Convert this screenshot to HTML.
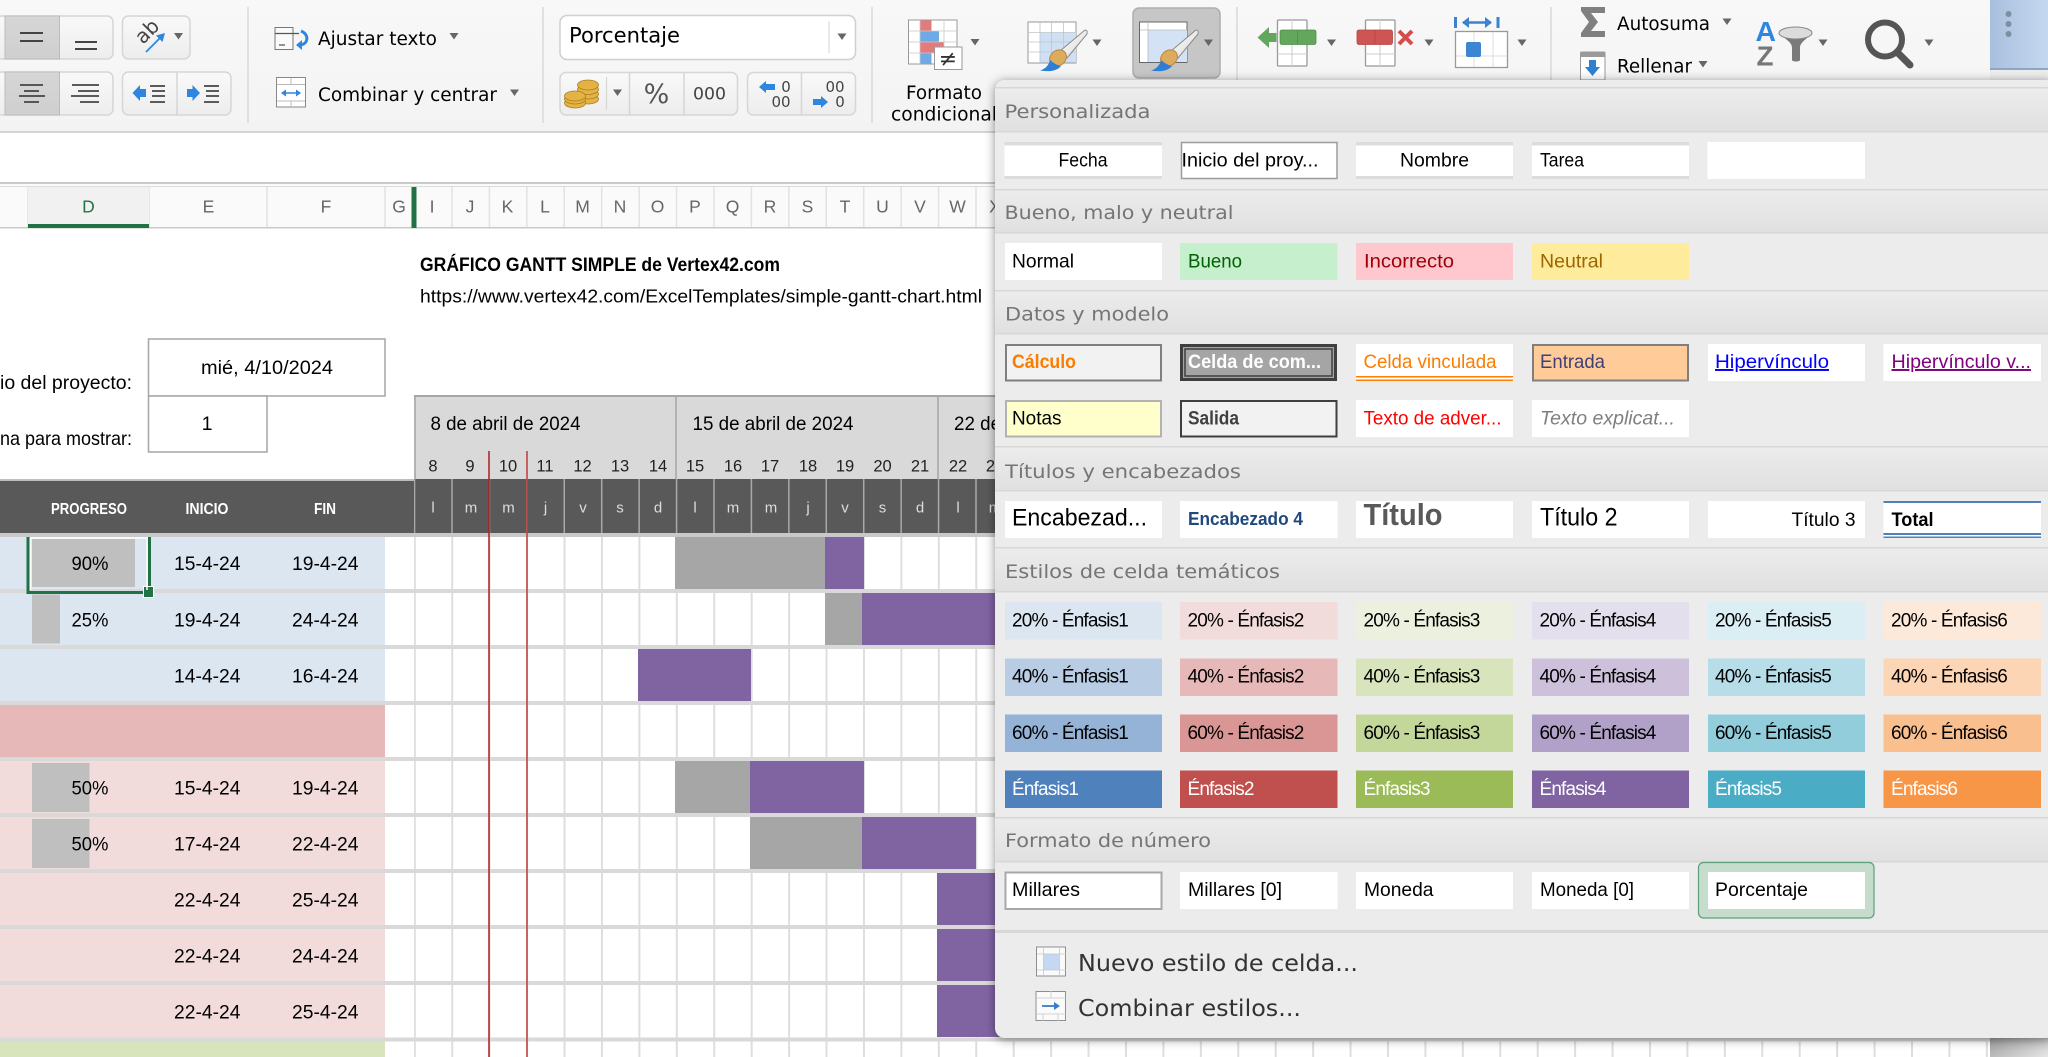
<!DOCTYPE html>
<html lang="es"><head><meta charset="utf-8"><title>Estilos de celda</title>
<style>
html,body{margin:0;padding:0;width:2048px;height:1057px;overflow:hidden;background:#fff}
svg{display:block}
text{font-family:"Liberation Sans",sans-serif;font-size:19.5px;fill:#000}
.d{font-family:"DejaVu Sans","Liberation Sans",sans-serif;font-size:18.5px}
.h{font-family:"DejaVu Sans","Liberation Sans",sans-serif;font-size:19px;fill:#757575}
.e{font-size:19px;letter-spacing:-.84px}
.w{fill:#fff}
.cl{font-size:17.5px;fill:#666;text-anchor:middle}
.dn{font-size:16.5px;text-anchor:middle;fill:#222}
.dl{font-size:15px;text-anchor:middle;fill:#ddd}
.th{font-size:16px;font-weight:bold;fill:#fff}
</style></head><body>
<svg width="2048" height="1057" viewBox="0 0 2048 1057" xmlns="http://www.w3.org/2000/svg">
<defs>
<linearGradient id="rb" x1="0" y1="0" x2="0" y2="1"><stop offset="0" stop-color="#f8f8f8"/><stop offset="1" stop-color="#f3f3f3"/></linearGradient>
<linearGradient id="btn" x1="0" y1="0" x2="0" y2="1"><stop offset="0" stop-color="#f9f9f9"/><stop offset="1" stop-color="#ededed"/></linearGradient>
<linearGradient id="pr" x1="0" y1="0" x2="0" y2="1"><stop offset="0" stop-color="#d6d6d6"/><stop offset="1" stop-color="#cfcfcf"/></linearGradient>
<linearGradient id="band" x1="0" y1="0" x2="0" y2="1"><stop offset="0" stop-color="#ececec"/><stop offset="1" stop-color="#e0e0e0"/></linearGradient>
<linearGradient id="blue" x1="0" y1="0" x2="1" y2="0"><stop offset="0" stop-color="#a8bfdd"/><stop offset="1" stop-color="#c6d8f0"/></linearGradient>
<linearGradient id="corner" x1="0" y1="0" x2="1" y2="1"><stop offset="0" stop-color="#8f8f8f"/><stop offset="1" stop-color="#e6e6e6"/></linearGradient>
<linearGradient id="hnd" x1="0" y1="0" x2="1" y2="1"><stop offset="0" stop-color="#fff"/><stop offset="1" stop-color="#d8d8d8"/></linearGradient>
<pattern id="vl" x="413.8" y="0" width="37.43" height="10" patternUnits="userSpaceOnUse"><rect x="0" width="2" height="10" fill="#dedede"/></pattern>
<pattern id="vh" x="413.8" y="0" width="37.43" height="10" patternUnits="userSpaceOnUse"><rect x="0" width="1.5" height="10" fill="#e2e2e2"/></pattern>
<pattern id="vd" x="413.8" y="0" width="37.43" height="10" patternUnits="userSpaceOnUse"><rect x="0" width="1.5" height="10" fill="#a9a9a9"/></pattern>
<path id="t" d="M-4.5-3H4.5L0 3.5Z" fill="#666"/>
<g id="brush">
<path d="M1085 30Q1088 30 1087 34L1067 58L1060 51Z" fill="url(#hnd)" stroke="#8a8a8a"/>
<ellipse cx="1058" cy="58" rx="9" ry="7.5" transform="rotate(-40 1058 58)" fill="#dcab5e" stroke="#b5873f"/>
<path d="M1040 70.5C1046 69 1049 64 1050.5 60C1053 63 1057 65 1061 66C1057 71 1050 72 1040 70.5Z" fill="#2e7dd7"/>
</g>
</defs>

<!-- ribbon -->
<rect width="2048" height="132" fill="url(#rb)"/>
<rect y="131" width="2048" height="2" fill="#d4d4d4"/>
<rect y="133" width="2048" height="49" fill="#fff"/>
<rect y="182" width="2048" height="2" fill="#c9c9c9"/>
<rect y="184" width="2048" height="2" fill="#fafafa"/>
<rect y="186" width="2048" height="1" fill="#dcdcdc"/>

<!-- alignment groups -->
<rect x="-10" y="16" width="123" height="43" rx="6" fill="url(#btn)" stroke="#d6d6d6" stroke-width="1.5"/>
<rect x="5" y="16" width="54.5" height="43" fill="url(#pr)" stroke="#bcbcbc"/>
<path d="M20 33H43M20 41H43M75 42H97M75 49H97" stroke="#444" stroke-width="2"/>
<rect x="-10" y="72" width="123" height="43" rx="6" fill="url(#btn)" stroke="#d6d6d6" stroke-width="1.5"/>
<rect x="5" y="72" width="54.5" height="43" fill="url(#pr)" stroke="#bcbcbc"/>
<path d="M20 85H43M24 91H39M19 96H45M24 102H39M72 85H99M78 91H99M71 96H99M80 102H99" stroke="#444" stroke-width="1.8"/>
<rect x="122.5" y="16" width="67.5" height="43" rx="6" fill="url(#btn)" stroke="#d6d6d6" stroke-width="1.5"/>
<text class="d" transform="translate(143,45) rotate(-45)" style="font-size:20px;fill:#444">ab</text>
<path d="M146 52L163 35" stroke="#2f86e0" stroke-width="1.8"/><path d="M165 33L156 35.5L162.5 42Z" fill="#2f86e0"/>
<use href="#t" x="178.5" y="36"/>
<rect x="122.5" y="72" width="108.5" height="43" rx="6" fill="url(#btn)" stroke="#d6d6d6" stroke-width="1.5"/>
<path d="M177 72V115" stroke="#d6d6d6" stroke-width="1.5"/>
<path d="M132.5 93L140 85V89H146V97H140V101Z" fill="#2f86e0"/>
<path d="M150 86H165M152 91H165M152 96H165M150 102H165" stroke="#444" stroke-width="1.8"/>
<path d="M200 93L192.5 85V89H187V97H192.5V101Z" fill="#2f86e0"/>
<path d="M204 86H219M206 91H219M206 96H219M204 102H219" stroke="#444" stroke-width="1.8"/>
<path d="M248 7V123M543 7V123M872 7V123M1237 7V80M1551 7V80" stroke="#d9d9d9" stroke-width="1.5"/>

<!-- wrap / merge -->
<rect x="275" y="27.5" width="18" height="22" fill="#fafafa" stroke="#777"/>
<path d="M275 33.5H299M279 45H285" stroke="#555" stroke-width="1.2"/>
<path d="M301 31C309 34 309 44 300 45" fill="none" stroke="#2f86e0" stroke-width="3"/><path d="M296 45L302 40V50Z" fill="#2f86e0"/>
<text class="d" x="318" y="45" textLength="119" lengthAdjust="spacingAndGlyphs">Ajustar texto</text>
<use href="#t" x="454" y="36"/>
<rect x="276.5" y="77.5" width="29" height="29.5" fill="#fff" stroke="#888"/>
<path d="M277 84.5H305M277 101H305M291 78V84M291 101V107" stroke="#bbb"/>
<path d="M282 93H300" stroke="#2f86e0" stroke-width="1.5"/><path d="M281 93L286 89.5V96.5ZM301 93L296 89.5V96.5Z" fill="#2f86e0"/>
<text class="d" x="318" y="101" textLength="179" lengthAdjust="spacingAndGlyphs">Combinar y centrar</text>
<use href="#t" x="514.5" y="92.5"/>

<!-- number format -->
<rect x="560" y="15.5" width="295.5" height="44" rx="7" fill="#fff" stroke="#cfcfcf" stroke-width="1.5"/>
<path d="M829 21V53" stroke="#e2e2e2" stroke-width="1.5"/>
<text class="d" x="569" y="42.5" style="font-size:21px" textLength="111" lengthAdjust="spacingAndGlyphs">Porcentaje</text>
<use href="#t" x="842" y="36.5"/>
<rect x="560" y="72.5" width="177.5" height="42.5" rx="6" fill="url(#btn)" stroke="#d6d6d6" stroke-width="1.5"/>
<path d="M606.5 77V110" stroke="#d6d6d6" stroke-width="1.2"/><path d="M629.5 72.5V115M684 72.5V115" stroke="#d6d6d6" stroke-width="1.5"/>
<g fill="#e5b343" stroke="#a97c22" stroke-width=".8">
<ellipse cx="588" cy="99" rx="10.5" ry="5"/><ellipse cx="588" cy="94" rx="10.5" ry="5"/><ellipse cx="588" cy="89.5" rx="10.5" ry="5"/><ellipse cx="588" cy="85" rx="10.5" ry="5"/>
<ellipse cx="575" cy="103" rx="10.5" ry="5"/><ellipse cx="575" cy="99" rx="10.5" ry="5"/><ellipse cx="575" cy="96" rx="10.5" ry="5"/>
</g>
<use href="#t" x="617.5" y="92.5"/>
<text class="d" x="656.5" y="103" text-anchor="middle" style="font-size:27px;fill:#555">%</text>
<text class="d" x="693" y="99.5" style="font-size:17px;fill:#444" textLength="33" lengthAdjust="spacingAndGlyphs">000</text>
<rect x="747.5" y="72.5" width="108" height="42.5" rx="6" fill="url(#btn)" stroke="#d6d6d6" stroke-width="1.5"/>
<path d="M801.5 72.5V115" stroke="#d6d6d6" stroke-width="1.5"/>
<path d="M759 87L766 81V84H775V90H766V93Z" fill="#2f86e0"/><path d="M828 102L821 96V99H813V105H821V108Z" fill="#2f86e0"/>
<text class="d" x="786" y="92" text-anchor="middle" style="font-size:15px;fill:#444">0</text>
<text class="d" x="781" y="107" text-anchor="middle" style="font-size:15px;fill:#444">00</text>
<text class="d" x="835" y="92" text-anchor="middle" style="font-size:15px;fill:#444">00</text>
<text class="d" x="840" y="107" text-anchor="middle" style="font-size:15px;fill:#444">0</text>

<!-- conditional -->
<rect x="908.5" y="20" width="48.5" height="44" fill="#fff" stroke="#999"/>
<rect x="920" y="20.5" width="11.5" height="11" fill="#e27c7c"/><rect x="920" y="31" width="19" height="11" fill="#6faae8"/><rect x="920" y="42" width="24" height="11" fill="#e27c7c"/><rect x="920" y="53" width="11.5" height="11" fill="#6faae8"/>
<path d="M909 31H957M909 42H957M909 53H957M920 20V64M944 20V64" stroke="#c9c9c9" stroke-width=".8" fill="none"/>
<rect x="934.5" y="47" width="27.5" height="22.5" fill="#fff" stroke="#999"/>
<text class="d" x="948" y="66" text-anchor="middle" style="font-size:22px;fill:#333">≠</text>
<use href="#t" x="975" y="42"/>
<text class="d" x="906" y="99" textLength="76" lengthAdjust="spacingAndGlyphs">Formato</text>
<text class="d" x="891" y="120.5" textLength="106" lengthAdjust="spacingAndGlyphs">condicional</text>

<!-- table format -->
<rect x="1028" y="22" width="48" height="41" fill="#fff" stroke="#999"/>
<rect x="1040" y="32.5" width="36" height="30" fill="#cfe0f5"/>
<path d="M1040 22V63M1051.5 22V63M1063.5 22V63M1028 32.5H1076M1028 42H1076M1028 52H1076" stroke="#bfc5cc" stroke-width=".8"/>
<use href="#brush"/><use href="#t" x="1097" y="42.5"/>
<rect x="1133" y="8" width="87" height="70" rx="6" fill="#c6c6c6" stroke="#adadad" stroke-width="1.5"/>
<rect x="1139.5" y="22" width="47.5" height="40.5" fill="#fff" stroke="#666"/>
<rect x="1148" y="30" width="39" height="32" fill="#d3e2f5"/><path d="M1140 30H1187M1148 22V62" stroke="#bbb" stroke-width=".8"/>
<use href="#brush" x="111"/><use href="#t" x="1208.5" y="42.5"/>

<!-- insert -->
<rect x="1277.5" y="20" width="29.5" height="46" rx="1" fill="#fff" stroke="#999" stroke-width="1.3"/>
<path d="M1277.5 54H1307M1292 20V30M1292 44V66" stroke="#ccc"/>
<rect x="1280" y="30" width="36" height="14.5" rx="2" fill="#62a75c" stroke="#4f8e49" stroke-width=".8"/><path d="M1297.5 30V44" stroke="#4f8e49" stroke-width=".8"/>
<path d="M1257.5 37.5L1269 27V33H1276.5V42H1269V48Z" fill="#62a75c"/><use href="#t" x="1331.5" y="42.5"/>
<!-- delete -->
<rect x="1365.5" y="20" width="29.5" height="46" rx="1" fill="#fff" stroke="#999" stroke-width="1.3"/>
<path d="M1365.5 54H1395M1380 20V30M1380 44V66" stroke="#ccc"/>
<rect x="1357" y="30" width="35.5" height="14.5" rx="2" fill="#cf5555" stroke="#b54343" stroke-width=".8"/><path d="M1375 30V44" stroke="#b54343" stroke-width=".8"/>
<path d="M1399 31L1412 44M1412 31L1399 44" stroke="#cf4f4f" stroke-width="4"/><use href="#t" x="1429" y="42.5"/>
<!-- format -->
<path d="M1455.5 17V28M1498 17V28" stroke="#3b82d0" stroke-width="3"/><path d="M1463 22.5H1491" stroke="#3b82d0" stroke-width="2.6"/><path d="M1462 22.5L1469 17V28ZM1492 22.5L1485 17V28Z" fill="#3b82d0"/>
<rect x="1455.5" y="31.5" width="52" height="36" fill="#fff" stroke="#999" stroke-width="1.3"/>
<path d="M1474 32V67M1493 32V67M1456 56H1507" stroke="#ddd"/>
<rect x="1466" y="42" width="15" height="15" rx="2" fill="#3d85d3"/><use href="#t" x="1522" y="42.5"/>

<!-- editing -->
<path d="M1581 7H1605V13H1591L1598 22L1591 31H1605V37H1581V33L1589 22L1581 11Z" fill="#808080"/>
<text class="d" x="1617" y="30" textLength="93" lengthAdjust="spacingAndGlyphs">Autosuma</text>
<use href="#t" x="1727" y="21.5"/>
<rect x="1580.5" y="52" width="24.5" height="28" rx="1" fill="#fff" stroke="#999"/><rect x="1581" y="52" width="24" height="5" fill="#9a9a9a"/>
<path d="M1589 60H1596V67H1600L1592.5 76L1585 67H1589Z" fill="#2f7fd0"/>
<text class="d" x="1617" y="72.5" textLength="75" lengthAdjust="spacingAndGlyphs">Rellenar</text>
<use href="#t" x="1703" y="64"/>
<text x="1755.5" y="41" style="font-size:28px;font-weight:bold;fill:#2f86e0" textLength="20.5" lengthAdjust="spacingAndGlyphs">A</text>
<text x="1756.5" y="65.5" style="font-size:28px;font-weight:bold;fill:#777" textLength="17" lengthAdjust="spacingAndGlyphs">Z</text>
<path d="M1779 33C1786 40 1792 42 1792 48V60C1792 62 1800 62 1800 60V48C1800 42 1806 40 1812 33Z" fill="#7a7a7a"/><ellipse cx="1795.5" cy="33" rx="16.5" ry="6" fill="#dcdcdc" stroke="#888"/>
<use href="#t" x="1823" y="42.5"/>
<circle cx="1885" cy="39.5" r="17" fill="#f6f6f6" stroke="#555" stroke-width="6"/>
<path d="M1897 52L1910 65" stroke="#555" stroke-width="7" stroke-linecap="round"/>
<use href="#t" x="1929" y="42.5"/>
<rect x="1990" width="58" height="68" fill="url(#blue)"/><rect x="1990" y="68" width="58" height="2" fill="#8ea6c4"/>
<circle cx="2008.5" cy="14" r="3" fill="#7f8ea3"/><circle cx="2008.5" cy="24" r="3" fill="#7f8ea3"/><circle cx="2008.5" cy="34" r="3" fill="#7f8ea3"/>

<!-- column header -->
<rect y="187" width="2048" height="40" fill="#fafafa"/>
<rect x="414" y="187" width="1576" height="40" fill="url(#vh)"/>
<path d="M28 187V227M149 187V227M267 187V227M385 187V227" stroke="#e2e2e2" stroke-width="1.5"/>
<rect y="227" width="2048" height="1.5" fill="#c9c9c9"/>
<rect x="28" y="187" width="121" height="37" fill="#f1f1f1"/>
<rect x="28" y="224" width="121" height="4" fill="#217346"/>
<rect x="411.5" y="187" width="5" height="41" fill="#217346"/>
<text x="88.5" y="212.5" style="font-size:17.5px;fill:#217346;text-anchor:middle">D</text>
<text class="cl" x="208.5" y="212.5">E</text><text class="cl" x="326" y="212.5">F</text><text class="cl" x="399" y="212.5">G</text>
<text class="cl" x="432" y="212.5">I</text><text class="cl" x="470" y="212.5">J</text><text class="cl" x="507.5" y="212.5">K</text><text class="cl" x="545" y="212.5">L</text><text class="cl" x="582.5" y="212.5">M</text><text class="cl" x="620" y="212.5">N</text><text class="cl" x="657.5" y="212.5">O</text><text class="cl" x="695" y="212.5">P</text><text class="cl" x="732.5" y="212.5">Q</text><text class="cl" x="770" y="212.5">R</text><text class="cl" x="807.5" y="212.5">S</text><text class="cl" x="845" y="212.5">T</text><text class="cl" x="882.5" y="212.5">U</text><text class="cl" x="920" y="212.5">V</text><text class="cl" x="957.5" y="212.5">W</text><text class="cl" x="995" y="212.5">X</text>

<!-- sheet header -->
<text x="420" y="271" style="font-weight:bold;font-size:19px" textLength="360" lengthAdjust="spacingAndGlyphs">GRÁFICO GANTT SIMPLE de Vertex42.com</text>
<text x="420" y="302.5" style="font-size:18.5px" textLength="562" lengthAdjust="spacingAndGlyphs">https://www.vertex42.com/ExcelTemplates/simple-gantt-chart.html</text>
<rect x="148.5" y="339" width="236.5" height="57" fill="#fff" stroke="#a6a6a6" stroke-width="1.5"/>
<rect x="148.5" y="396" width="118.5" height="56" fill="#fff" stroke="#a6a6a6" stroke-width="1.5"/>
<text x="201" y="374" textLength="132" lengthAdjust="spacingAndGlyphs">mié, 4/10/2024</text>
<text x="207" y="430" text-anchor="middle">1</text>
<text x="0" y="389" textLength="132" lengthAdjust="spacingAndGlyphs">io del proyecto:</text>
<text x="0" y="445" textLength="132" lengthAdjust="spacingAndGlyphs">na para mostrar:</text>

<!-- gantt head -->
<rect x="414" y="395" width="600" height="84" fill="#d9d9d9"/>
<path d="M414 396H1000" stroke="#a6a6a6" stroke-width="2"/>
<path d="M415 395V479M676 395V479M938 395V479" stroke="#a6a6a6" stroke-width="1.5"/>
<text x="430.5" y="430" style="font-size:19px" textLength="150" lengthAdjust="spacingAndGlyphs">8 de abril de 2024</text>
<text x="692.5" y="430" style="font-size:19px" textLength="161" lengthAdjust="spacingAndGlyphs">15 de abril de 2024</text>
<text x="954" y="430" style="font-size:19px" textLength="161" lengthAdjust="spacingAndGlyphs">22 de abril de 2024</text>
<text class="dn" x="433" y="471.5">8</text><text class="dn" x="470" y="471.5">9</text><text class="dn" x="508" y="471.5">10</text><text class="dn" x="545" y="471.5">11</text><text class="dn" x="582.5" y="471.5">12</text><text class="dn" x="620" y="471.5">13</text><text class="dn" x="658" y="471.5">14</text><text class="dn" x="695" y="471.5">15</text><text class="dn" x="733" y="471.5">16</text><text class="dn" x="770" y="471.5">17</text><text class="dn" x="808" y="471.5">18</text><text class="dn" x="845" y="471.5">19</text><text class="dn" x="882.5" y="471.5">20</text><text class="dn" x="920" y="471.5">21</text><text class="dn" x="958" y="471.5">22</text><text class="dn" x="995" y="471.5">23</text>
<rect y="480" width="414" height="53" fill="#595959"/><rect y="479" width="414" height="2" fill="#bdbdbd"/>
<rect x="414" y="479" width="1000" height="54" fill="#595959"/>
<rect x="414" y="479" width="1000" height="54" fill="url(#vd)"/>
<text class="th" x="51" y="514" textLength="76" lengthAdjust="spacingAndGlyphs">PROGRESO</text>
<text class="th" x="185.5" y="514" textLength="43" lengthAdjust="spacingAndGlyphs">INICIO</text>
<text class="th" x="314" y="514" textLength="22" lengthAdjust="spacingAndGlyphs">FIN</text>
<text class="dl" x="433" y="512.5">l</text><text class="dl" x="471" y="512.5">m</text><text class="dl" x="508.5" y="512.5">m</text><text class="dl" x="545.5" y="512.5">j</text><text class="dl" x="583" y="512.5">v</text><text class="dl" x="620" y="512.5">s</text><text class="dl" x="658" y="512.5">d</text><text class="dl" x="695" y="512.5">l</text><text class="dl" x="733" y="512.5">m</text><text class="dl" x="771" y="512.5">m</text><text class="dl" x="808" y="512.5">j</text><text class="dl" x="845" y="512.5">v</text><text class="dl" x="882.5" y="512.5">s</text><text class="dl" x="920" y="512.5">d</text><text class="dl" x="958" y="512.5">l</text><text class="dl" x="995" y="512.5">m</text>

<!-- rows -->
<rect x="0" y="537" width="385" height="168" fill="#dce6f1"/>
<rect x="0" y="705" width="385" height="56" fill="#e6b8b7"/>
<rect x="0" y="761" width="385" height="280" fill="#f2dcdb"/>
<rect x="0" y="1041" width="385" height="16" fill="#d8e4bc"/>
<rect x="414" y="537" width="1576" height="520" fill="url(#vl)"/>
<!-- gantt bars -->
<rect x="675" y="537" width="150" height="52" fill="#a6a6a6"/><rect x="825" y="537" width="39" height="52" fill="#8064a2"/>
<rect x="825" y="593" width="37" height="52" fill="#a6a6a6"/><rect x="862" y="593" width="140" height="52" fill="#8064a2"/>
<rect x="638" y="649" width="113" height="52" fill="#8064a2"/>
<rect x="675" y="761" width="75" height="52" fill="#a6a6a6"/><rect x="750" y="761" width="114" height="52" fill="#8064a2"/>
<rect x="750" y="817" width="112" height="52" fill="#a6a6a6"/><rect x="862" y="817" width="114" height="52" fill="#8064a2"/>
<rect x="937" y="873" width="65" height="52" fill="#8064a2"/><rect x="937" y="929" width="65" height="52" fill="#8064a2"/><rect x="937" y="985" width="65" height="52" fill="#8064a2"/>
<!-- bands -->
<g fill="#d9d9d9">
<rect y="533" width="1990" height="4" fill="#c8c8c8"/><rect y="589" width="1990" height="4"/><rect y="645" width="1990" height="4"/><rect y="701" width="1990" height="4"/><rect y="757" width="1990" height="4"/><rect y="813" width="1990" height="4"/><rect y="869" width="1990" height="4"/><rect y="925" width="1990" height="4"/><rect y="981" width="1990" height="4"/><rect y="1037.5" width="1990" height="4"/>
</g>
<path d="M489 451V1057" stroke="#a91f1f" stroke-width="1.5"/><path d="M527 451V1057" stroke="#c0393b" stroke-width="1.5"/>
<!-- progress -->
<rect x="32" y="539" width="103" height="48" fill="#bfbfbf"/>
<rect x="32" y="594.5" width="28" height="49" fill="#bfbfbf"/>
<rect x="32" y="763" width="57.5" height="49" fill="#bfbfbf"/>
<rect x="32" y="819" width="57.5" height="49" fill="#bfbfbf"/>
<!-- selection -->
<path d="M28 537V592.5H149.5V537" fill="none" stroke="#217346" stroke-width="3"/>
<rect x="143.5" y="586.5" width="10" height="11" fill="#217346" stroke="#fff"/>
<path d="M30 538H148M30.5 538V590M147 538V590" fill="none" stroke="#fff" stroke-width="1.5"/>
<!-- row text -->
<text x="71.5" y="570" textLength="37" lengthAdjust="spacingAndGlyphs">90%</text><text x="174" y="570" textLength="66.5" lengthAdjust="spacingAndGlyphs">15-4-24</text><text x="292" y="570" textLength="66.5" lengthAdjust="spacingAndGlyphs">19-4-24</text>
<text x="71.5" y="626.5" textLength="37" lengthAdjust="spacingAndGlyphs">25%</text><text x="174" y="626.5" textLength="66.5" lengthAdjust="spacingAndGlyphs">19-4-24</text><text x="292" y="626.5" textLength="66.5" lengthAdjust="spacingAndGlyphs">24-4-24</text>
<text x="174" y="682.5" textLength="66.5" lengthAdjust="spacingAndGlyphs">14-4-24</text><text x="292" y="682.5" textLength="66.5" lengthAdjust="spacingAndGlyphs">16-4-24</text>
<text x="71.5" y="794.5" textLength="37" lengthAdjust="spacingAndGlyphs">50%</text><text x="174" y="794.5" textLength="66.5" lengthAdjust="spacingAndGlyphs">15-4-24</text><text x="292" y="794.5" textLength="66.5" lengthAdjust="spacingAndGlyphs">19-4-24</text>
<text x="71.5" y="850.5" textLength="37" lengthAdjust="spacingAndGlyphs">50%</text><text x="174" y="850.5" textLength="66.5" lengthAdjust="spacingAndGlyphs">17-4-24</text><text x="292" y="850.5" textLength="66.5" lengthAdjust="spacingAndGlyphs">22-4-24</text>
<text x="174" y="906.5" textLength="66.5" lengthAdjust="spacingAndGlyphs">22-4-24</text><text x="292" y="906.5" textLength="66.5" lengthAdjust="spacingAndGlyphs">25-4-24</text>
<text x="174" y="962.5" textLength="66.5" lengthAdjust="spacingAndGlyphs">22-4-24</text><text x="292" y="962.5" textLength="66.5" lengthAdjust="spacingAndGlyphs">24-4-24</text>
<text x="174" y="1018.5" textLength="66.5" lengthAdjust="spacingAndGlyphs">22-4-24</text><text x="292" y="1018.5" textLength="66.5" lengthAdjust="spacingAndGlyphs">25-4-24</text>

<!-- bottom right corner -->
<rect x="1990" y="1030" width="58" height="27" fill="url(#corner)"/>
<rect x="1990" y="70" width="58" height="20" fill="#ededed"/>

<!-- panel -->
<filter id="sh" x="-5%" y="-5%" width="110%" height="110%"><feDropShadow dx="0" dy="1.5" stdDeviation="5" flood-color="#000" flood-opacity=".45"/></filter>
<rect x="995" y="80" width="1060" height="958" rx="10" fill="#ececec" filter="url(#sh)"/>
<rect x="995" y="88" width="1053" height="44" fill="url(#band)"/><rect x="995" y="190" width="1053" height="43" fill="url(#band)"/><rect x="995" y="291" width="1053" height="43" fill="url(#band)"/><rect x="995" y="447" width="1053" height="44" fill="url(#band)"/><rect x="995" y="548" width="1053" height="44" fill="url(#band)"/><rect x="995" y="818" width="1053" height="44" fill="url(#band)"/>
<g fill="#d7d7d7">
<rect x="995" y="87" width="1053" height="1.5"/><rect x="995" y="131" width="1053" height="1.5"/><rect x="995" y="189" width="1053" height="1.5"/><rect x="995" y="232" width="1053" height="1.5"/><rect x="995" y="290" width="1053" height="1.5"/><rect x="995" y="333" width="1053" height="1.5"/><rect x="995" y="446" width="1053" height="1.5"/><rect x="995" y="490" width="1053" height="1.5"/><rect x="995" y="547" width="1053" height="1.5"/><rect x="995" y="591" width="1053" height="1.5"/><rect x="995" y="817" width="1053" height="1.5"/><rect x="995" y="861" width="1053" height="1.5"/><rect x="995" y="930" width="1053" height="3"/>
</g>
<text class="h" x="1004.5" y="118" textLength="146" lengthAdjust="spacingAndGlyphs">Personalizada</text>
<text class="h" x="1004.5" y="219" textLength="229" lengthAdjust="spacingAndGlyphs">Bueno, malo y neutral</text>
<text class="h" x="1005" y="320.5" textLength="164" lengthAdjust="spacingAndGlyphs">Datos y modelo</text>
<text class="h" x="1005" y="478" textLength="236" lengthAdjust="spacingAndGlyphs">Títulos y encabezados</text>
<text class="h" x="1005" y="578" textLength="275" lengthAdjust="spacingAndGlyphs">Estilos de celda temáticos</text>
<text class="h" x="1005" y="847" textLength="206" lengthAdjust="spacingAndGlyphs">Formato de número</text>

<!-- Personalizada -->
<g fill="#fff">
<rect x="1004.5" y="142" width="157.5" height="37"/><rect x="1356" y="142" width="157" height="37"/><rect x="1532" y="142" width="157" height="37"/><rect x="1707.5" y="142" width="157.5" height="37"/>
</g>
<g fill="#dcdcdc"><rect x="1004.5" y="142" width="157.5" height="3.5"/><rect x="1004.5" y="176" width="157.5" height="3"/><rect x="1356" y="142" width="157" height="3.5"/><rect x="1356" y="176" width="157" height="3"/><rect x="1532" y="142" width="157" height="3.5"/><rect x="1532" y="176" width="157" height="3"/></g>
<rect x="1181.5" y="142.5" width="155.5" height="36" fill="#fff" stroke="#9c9c9c" stroke-width="1.5"/>
<text x="1058.5" y="166.5" textLength="49" lengthAdjust="spacingAndGlyphs">Fecha</text>
<text x="1181.5" y="166.5" textLength="137" lengthAdjust="spacingAndGlyphs">Inicio del proy...</text>
<text x="1400" y="166.5" textLength="69" lengthAdjust="spacingAndGlyphs">Nombre</text>
<text x="1540" y="166.5" textLength="44" lengthAdjust="spacingAndGlyphs">Tarea</text>

<!-- Bueno malo neutral -->
<rect x="1005" y="243" width="157" height="37" fill="#fff"/><rect x="1180" y="243" width="157.5" height="37" fill="#c6efce"/><rect x="1356" y="243" width="157" height="37" fill="#ffc7ce"/><rect x="1532" y="243" width="157" height="37" fill="#ffeb9c"/>
<text x="1012" y="267.5" textLength="62" lengthAdjust="spacingAndGlyphs">Normal</text>
<text x="1188" y="267.5" style="fill:#006100" textLength="54" lengthAdjust="spacingAndGlyphs">Bueno</text>
<text x="1364" y="267.5" style="fill:#9c0006" textLength="90" lengthAdjust="spacingAndGlyphs">Incorrecto</text>
<text x="1540" y="267.5" style="fill:#9c6500" textLength="63" lengthAdjust="spacingAndGlyphs">Neutral</text>

<!-- Datos y modelo -->
<rect x="1006" y="345" width="155" height="35.5" fill="#f2f2f2" stroke="#7f7f7f" stroke-width="2"/>
<rect x="1180" y="344" width="157" height="37" fill="#a5a5a5"/><rect x="1181.5" y="345.5" width="154" height="34" fill="none" stroke="#3f3f3f" stroke-width="3"/><rect x="1185" y="349" width="147" height="27" fill="none" stroke="#3f3f3f" stroke-width="1.5"/>
<rect x="1356" y="344" width="157" height="37" fill="#fff"/><rect x="1356" y="376" width="157" height="1.5" fill="#ff8001"/><rect x="1356" y="379.5" width="157" height="1.5" fill="#ff8001"/>
<rect x="1533" y="345" width="155" height="35.5" fill="#ffcc99" stroke="#7f7f7f" stroke-width="2"/>
<rect x="1708" y="344" width="157" height="37" fill="#fff"/><rect x="1883.5" y="344" width="157.5" height="37" fill="#fff"/>
<text x="1012" y="368" style="font-weight:bold;fill:#fa7d00" textLength="64" lengthAdjust="spacingAndGlyphs">Cálculo</text>
<text x="1188" y="368" style="font-weight:bold;fill:#fff" textLength="133" lengthAdjust="spacingAndGlyphs">Celda de com...</text>
<text x="1363.5" y="368" style="fill:#fa7d00" textLength="133" lengthAdjust="spacingAndGlyphs">Celda vinculada</text>
<text x="1540" y="368" style="fill:#3f3f76" textLength="65" lengthAdjust="spacingAndGlyphs">Entrada</text>
<text x="1715" y="368" style="fill:#0000ff" text-decoration="underline" textLength="114" lengthAdjust="spacingAndGlyphs">Hipervínculo</text>
<text x="1891.5" y="368" style="fill:#800080" text-decoration="underline" textLength="139.5" lengthAdjust="spacingAndGlyphs">Hipervínculo v...</text>
<rect x="1006" y="401" width="155" height="35.5" fill="#ffffcc" stroke="#b2b2b2" stroke-width="2"/>
<rect x="1181" y="401" width="155.5" height="35.5" fill="#f2f2f2" stroke="#3f3f3f" stroke-width="2"/>
<rect x="1356" y="400" width="157" height="37" fill="#fff"/><rect x="1532" y="400" width="157" height="37" fill="#fff"/>
<text x="1012" y="424.5" textLength="49.5" lengthAdjust="spacingAndGlyphs">Notas</text>
<text x="1188" y="424.5" style="font-weight:bold;fill:#3f3f3f" textLength="51" lengthAdjust="spacingAndGlyphs">Salida</text>
<text x="1363.5" y="424.5" style="fill:#ff0000" textLength="138" lengthAdjust="spacingAndGlyphs">Texto de adver...</text>
<text x="1540" y="424.5" style="font-style:italic;fill:#7f7f7f" textLength="135" lengthAdjust="spacingAndGlyphs">Texto explicat...</text>

<!-- Títulos -->
<rect x="1005" y="501" width="157" height="37" fill="#fff"/><rect x="1180" y="501" width="157.5" height="37" fill="#fff"/><rect x="1356" y="501" width="157" height="37" fill="#fff"/><rect x="1532" y="501" width="157" height="37" fill="#fff"/><rect x="1708" y="501" width="157" height="37" fill="#fff"/><rect x="1883.5" y="501" width="157.5" height="37" fill="#fff"/>
<rect x="1883.5" y="501" width="157.5" height="2" fill="#4f81bd"/><rect x="1883.5" y="533" width="157.5" height="2" fill="#4f81bd"/><rect x="1883.5" y="536.5" width="157.5" height="1.5" fill="#4f81bd"/>
<text x="1012" y="525.5" style="font-size:24px" textLength="135" lengthAdjust="spacingAndGlyphs">Encabezad...</text>
<text x="1188" y="525" style="font-weight:bold;fill:#1f497d;font-size:18.5px" textLength="115" lengthAdjust="spacingAndGlyphs">Encabezado 4</text>
<text x="1363.5" y="525" style="font-weight:bold;fill:#595959;font-size:31px" textLength="79" lengthAdjust="spacingAndGlyphs">Título</text>
<text x="1540" y="525.5" style="font-size:25px" textLength="77.5" lengthAdjust="spacingAndGlyphs">Título 2</text>
<text x="1791.5" y="526" style="font-size:19px" textLength="64" lengthAdjust="spacingAndGlyphs">Título 3</text>
<text x="1891.5" y="526" style="font-weight:bold;font-size:19px" textLength="42" lengthAdjust="spacingAndGlyphs">Total</text>

<!-- Temáticos -->
<g>
<rect x="1005" y="602" width="157" height="37.5" fill="#dce6f1"/><rect x="1180" y="602" width="157.5" height="37.5" fill="#f2dcdb"/><rect x="1356" y="602" width="157" height="37.5" fill="#ebf1de"/><rect x="1532" y="602" width="157" height="37.5" fill="#e4dfec"/><rect x="1708" y="602" width="157" height="37.5" fill="#daeef3"/><rect x="1883.5" y="602" width="157.5" height="37.5" fill="#fde9d9"/>
<rect x="1005" y="658.5" width="157" height="37.5" fill="#b8cce4"/><rect x="1180" y="658.5" width="157.5" height="37.5" fill="#e6b8b7"/><rect x="1356" y="658.5" width="157" height="37.5" fill="#d8e4bc"/><rect x="1532" y="658.5" width="157" height="37.5" fill="#ccc0da"/><rect x="1708" y="658.5" width="157" height="37.5" fill="#b7dee8"/><rect x="1883.5" y="658.5" width="157.5" height="37.5" fill="#fcd5b4"/>
<rect x="1005" y="714.5" width="157" height="37.5" fill="#95b3d7"/><rect x="1180" y="714.5" width="157.5" height="37.5" fill="#da9694"/><rect x="1356" y="714.5" width="157" height="37.5" fill="#c4d79b"/><rect x="1532" y="714.5" width="157" height="37.5" fill="#b1a0c7"/><rect x="1708" y="714.5" width="157" height="37.5" fill="#92cddc"/><rect x="1883.5" y="714.5" width="157.5" height="37.5" fill="#fabf8f"/>
<rect x="1005" y="770.5" width="157" height="37.5" fill="#4f81bd"/><rect x="1180" y="770.5" width="157.5" height="37.5" fill="#c0504d"/><rect x="1356" y="770.5" width="157" height="37.5" fill="#9bbb59"/><rect x="1532" y="770.5" width="157" height="37.5" fill="#8064a2"/><rect x="1708" y="770.5" width="157" height="37.5" fill="#4bacc6"/><rect x="1883.5" y="770.5" width="157.5" height="37.5" fill="#f79646"/>
</g>
<text class="e" x="1012" y="626.5">20% - Énfasis1</text><text class="e" x="1187.5" y="626.5">20% - Énfasis2</text><text class="e" x="1363.5" y="626.5">20% - Énfasis3</text><text class="e" x="1539.5" y="626.5">20% - Énfasis4</text><text class="e" x="1715" y="626.5">20% - Énfasis5</text><text class="e" x="1891" y="626.5">20% - Énfasis6</text>
<text class="e" x="1012" y="682.5">40% - Énfasis1</text><text class="e" x="1187.5" y="682.5">40% - Énfasis2</text><text class="e" x="1363.5" y="682.5">40% - Énfasis3</text><text class="e" x="1539.5" y="682.5">40% - Énfasis4</text><text class="e" x="1715" y="682.5">40% - Énfasis5</text><text class="e" x="1891" y="682.5">40% - Énfasis6</text>
<text class="e" x="1012" y="739">60% - Énfasis1</text><text class="e" x="1187.5" y="739">60% - Énfasis2</text><text class="e" x="1363.5" y="739">60% - Énfasis3</text><text class="e" x="1539.5" y="739">60% - Énfasis4</text><text class="e" x="1715" y="739">60% - Énfasis5</text><text class="e" x="1891" y="739">60% - Énfasis6</text>
<text class="e w" x="1012" y="795">Énfasis1</text><text class="e w" x="1187.5" y="795">Énfasis2</text><text class="e w" x="1363.5" y="795">Énfasis3</text><text class="e w" x="1539.5" y="795">Énfasis4</text><text class="e w" x="1715" y="795">Énfasis5</text><text class="e w" x="1891" y="795">Énfasis6</text>

<!-- Formato de número -->
<rect x="1698.5" y="862.5" width="175.5" height="55.5" rx="5" fill="#c6dccd" stroke="#5d9f7b" stroke-width="1.2"/>
<rect x="1005.5" y="872.5" width="156" height="36.5" fill="#fff" stroke="#a8a8a8" stroke-width="2"/>
<rect x="1180" y="872" width="157.5" height="37" fill="#fff"/><rect x="1356" y="872" width="157" height="37" fill="#fff"/><rect x="1532" y="872" width="157" height="37" fill="#fff"/><rect x="1708" y="872" width="157" height="37" fill="#fff"/>
<text x="1012" y="896" textLength="68" lengthAdjust="spacingAndGlyphs">Millares</text>
<text x="1188" y="896" textLength="94" lengthAdjust="spacingAndGlyphs">Millares [0]</text>
<text x="1364" y="896" textLength="69.5" lengthAdjust="spacingAndGlyphs">Moneda</text>
<text x="1540" y="896" textLength="94" lengthAdjust="spacingAndGlyphs">Moneda [0]</text>
<text x="1715" y="896" textLength="93" lengthAdjust="spacingAndGlyphs">Porcentaje</text>

<!-- menu -->
<rect x="1036.5" y="947" width="29" height="29" fill="#fafafa" stroke="#8f8f8f"/>
<rect x="1043.5" y="954" width="16" height="16" fill="#c4d8f2"/>
<path d="M1037 954H1066M1037 970H1066M1043.5 947V976M1059.5 947V976" stroke="#c8c8c8" stroke-width=".8"/>
<rect x="1036" y="991.5" width="29.5" height="29" fill="#fafafa" stroke="#8f8f8f"/>
<path d="M1036 998H1066M1036 1014H1066M1051 991V998M1043 1014V1021M1058 1014V1021" stroke="#c8c8c8" stroke-width=".8"/>
<path d="M1042 1006H1058" stroke="#3b7cc9" stroke-width="1.8"/><path d="M1060 1006L1054 1002V1010Z" fill="#3b7cc9"/>
<text class="d" x="1078" y="971" style="font-size:23px;fill:#333" textLength="280" lengthAdjust="spacingAndGlyphs">Nuevo estilo de celda...</text>
<text class="d" x="1078" y="1016" style="font-size:23px;fill:#333" textLength="223" lengthAdjust="spacingAndGlyphs">Combinar estilos...</text>
</svg>
</body></html>
